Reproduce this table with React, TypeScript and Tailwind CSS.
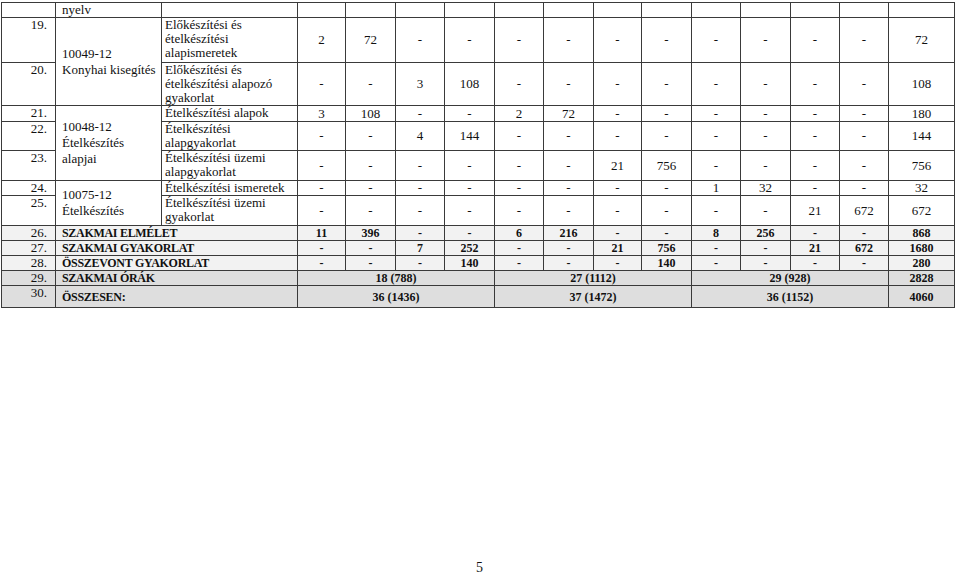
const D = "-";

type Row = {
  num: string;
  subject: string;
  cells: string[];
  total: string;
  h: number;
};

const ROWS: Row[] = [
  { num: "19.", subject: "Előkészítési és ételkészítési alapismeretek", cells: ["2", "72", D, D, D, D, D, D, D, D, D, D], total: "72", h: 45 },
  { num: "20.", subject: "Előkészítési és ételkészítési alapozó gyakorlat", cells: [D, D, "3", "108", D, D, D, D, D, D, D, D], total: "108", h: 43 },
  { num: "21.", subject: "Ételkészítési alapok", cells: ["3", "108", D, D, "2", "72", D, D, D, D, D, D], total: "180", h: 16 },
  { num: "22.", subject: "Ételkészítési alapgyakorlat", cells: [D, D, "4", "144", D, D, D, D, D, D, D, D], total: "144", h: 28 },
  { num: "23.", subject: "Ételkészítési üzemi alapgyakorlat", cells: [D, D, D, D, D, D, "21", "756", D, D, D, D], total: "756", h: 30 },
  { num: "24.", subject: "Ételkészítési ismeretek", cells: [D, D, D, D, D, D, D, D, "1", "32", D, D], total: "32", h: 15 },
  { num: "25.", subject: "Ételkészítési üzemi gyakorlat", cells: [D, D, D, D, D, D, D, D, D, D, "21", "672"], total: "672", h: 30 },
];

const MODULES: Record<number, { rows: number; lines: string[] }> = {
  0: { rows: 2, lines: ["10049-12", "Konyhai kisegítés"] },
  2: { rows: 3, lines: ["10048-12", "Ételkészítés", "alapjai"] },
  5: { rows: 2, lines: ["10075-12", "Ételkészítés"] },
};

const SUMS = [
  { num: "26.", label: "SZAKMAI ELMÉLET", cells: ["11", "396", D, D, "6", "216", D, D, "8", "256", D, D], total: "868", h: 13 },
  { num: "27.", label: "SZAKMAI GYAKORLAT", cells: [D, D, "7", "252", D, D, "21", "756", D, D, "21", "672"], total: "1680", h: 14 },
  { num: "28.", label: "ÖSSZEVONT GYAKORLAT", cells: [D, D, D, "140", D, D, D, "140", D, D, D, D], total: "280", h: 13 },
];

const TOTALS = [
  { num: "29.", label: "SZAKMAI ÓRÁK", groups: ["18 (788)", "27 (1112)", "29 (928)"], total: "2828", h: 14 },
  { num: "30.", label: "ÖSSZESEN:", groups: ["36 (1436)", "37 (1472)", "36 (1152)"], total: "4060", h: 22 },
];

const COLS = [48, 50, 49, 50, 49, 50, 48, 50, 49, 50, 49, 49];

const bd = "border border-[#3a3a3a] p-0";
const numCell = `${bd} pr-[8px] text-right align-top font-normal text-[13px] leading-[14px]`;
const valCell = `${bd} text-center align-middle`;
const boldVal = `${bd} text-center align-middle text-[12px] leading-[12px]`;
const boldLabel = `${bd} pl-[6px] align-middle text-[12px] leading-[12px] tracking-[-0.3px]`;

export default function App() {
  return (
    <div
      className="h-[577px] overflow-hidden bg-white text-[#111] text-[13px] leading-[14px]"
      style={{ fontFamily: '"Liberation Serif", "DejaVu Serif", serif' }}
    >
      <div className="pl-[1px] pt-[2px]">
        <table className="table-fixed border-collapse w-[953px]">
          <colgroup>
            <col className="w-[54px]" />
            <col className="w-[106px]" />
            <col className="w-[136px]" />
            {COLS.map((w, i) => (
              <col key={i} style={{ width: w }} />
            ))}
            <col className="w-[66px]" />
          </colgroup>
          <tbody>
            <tr className="h-[15px]">
              <td className={bd}></td>
              <td className={`${bd} pl-[6px] align-top`}>nyelv</td>
              <td className={bd}></td>
              {COLS.map((_, i) => (
                <td key={i} className={bd}></td>
              ))}
              <td className={bd}></td>
            </tr>
            {ROWS.map((r, i) => (
              <tr key={r.num} style={{ height: r.h }}>
                <td className={numCell}>{r.num}</td>
                {MODULES[i] ? (
                  <td rowSpan={MODULES[i].rows} className={`${bd} pl-[6px] align-middle leading-[16px]`}>
                    {MODULES[i].lines.map((l) => (
                      <div key={l}>{l}</div>
                    ))}
                  </td>
                ) : null}
                <td className={`${bd} pl-[3px] pr-[2px] align-top leading-[14px]`}>{r.subject}</td>
                {r.cells.map((c, j) => (
                  <td key={j} className={valCell}>
                    {c}
                  </td>
                ))}
                <td className={valCell}>{r.total}</td>
              </tr>
            ))}
            {SUMS.map((r) => (
              <tr key={r.num} className="bg-[#f2f2f2] font-bold" style={{ height: r.h }}>
                <td className={numCell}>{r.num}</td>
                <td colSpan={2} className={boldLabel}>
                  {r.label}
                </td>
                {r.cells.map((c, j) => (
                  <td key={j} className={boldVal}>
                    {c}
                  </td>
                ))}
                <td className={boldVal}>{r.total}</td>
              </tr>
            ))}
            {TOTALS.map((r) => (
              <tr key={r.num} className="bg-[#dedede] font-bold" style={{ height: r.h }}>
                <td className={numCell}>{r.num}</td>
                <td colSpan={2} className={boldLabel}>
                  {r.label}
                </td>
                {r.groups.map((g) => (
                  <td key={g} colSpan={4} className={boldVal}>
                    {g}
                  </td>
                ))}
                <td className={boldVal}>{r.total}</td>
              </tr>
            ))}
          </tbody>
        </table>
      </div>
      <div className="mt-[253px] text-center text-[14px] leading-[14px]">5</div>
    </div>
  );
}
